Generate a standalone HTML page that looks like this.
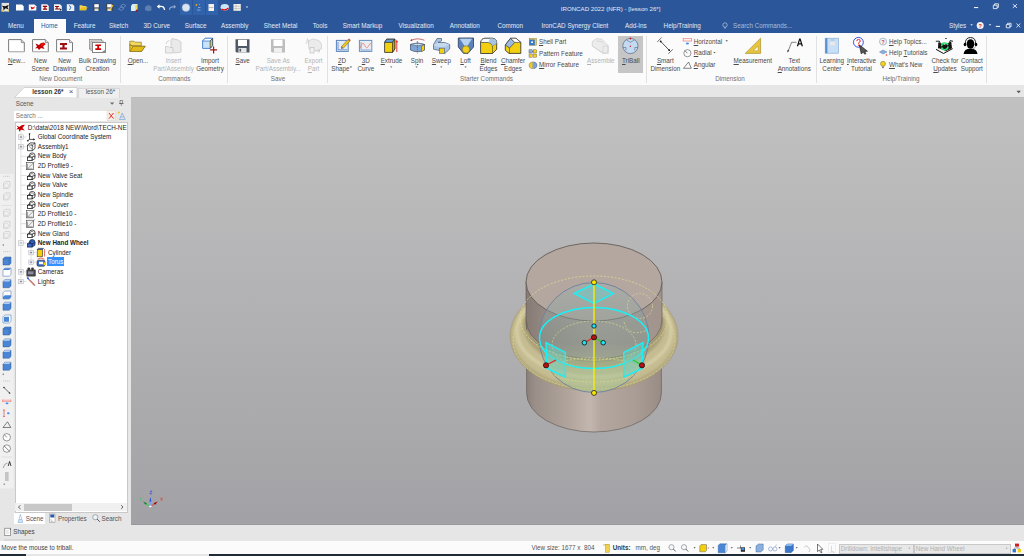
<!DOCTYPE html><html><head><meta charset="utf-8"><style>
html,body{margin:0;padding:0;width:1024px;height:556px;overflow:hidden;background:#E6E6E6}
body>div,body>svg{position:absolute}
.t{white-space:nowrap;font-family:"Liberation Sans",sans-serif}
u{text-underline-offset:0.7px}
</style></head><body>
<div style="left:0px;top:0px;width:1024px;height:33px;background:#2B579A"></div>
<div style="left:0px;top:33px;width:1024px;height:52px;background:#FBFBFB"></div>
<div style="left:0px;top:85px;width:1024px;height:12px;background:#E6E6E6"></div>
<div style="left:0px;top:97px;width:131px;height:428px;background:#E6E6E6"></div>
<div style="left:131px;top:97px;width:893px;height:428px;background:linear-gradient(#C1C1C1,#A2A1A5)"></div>
<div style="left:131px;top:524px;width:893px;height:1px;background:#99989C"></div>
<div style="left:131px;top:97px;width:893px;height:1px;background:#BCBCBC"></div>
<div style="left:0px;top:525px;width:1024px;height:16px;background:#E6E6E6"></div>
<div style="left:0px;top:541px;width:1024px;height:13px;background:#FBFBFB"></div>
<div style="left:0px;top:554px;width:25.5px;height:2px;background:#1E2A35"></div>
<div style="left:25.5px;top:554px;width:183.5px;height:2px;background:#E6E6E6"></div>
<div style="left:209px;top:554px;width:815px;height:2px;background:#1E2A35"></div>
<div style="left:34px;top:19px;width:31.5px;height:14px;background:#FBFBFB"></div>
<div class="t" style="left:8px;top:22.0px;font-size:6.3px;line-height:8px;color:#E4EAF4;">Menu</div>
<div class="t" style="left:73.7px;top:22.0px;font-size:6.3px;line-height:8px;color:#E4EAF4;">Feature</div>
<div class="t" style="left:109px;top:22.0px;font-size:6.3px;line-height:8px;color:#E4EAF4;">Sketch</div>
<div class="t" style="left:143.5px;top:22.0px;font-size:6.3px;line-height:8px;color:#E4EAF4;">3D Curve</div>
<div class="t" style="left:184.8px;top:22.0px;font-size:6.3px;line-height:8px;color:#E4EAF4;">Surface</div>
<div class="t" style="left:221px;top:22.0px;font-size:6.3px;line-height:8px;color:#E4EAF4;">Assembly</div>
<div class="t" style="left:263.7px;top:22.0px;font-size:6.3px;line-height:8px;color:#E4EAF4;">Sheet Metal</div>
<div class="t" style="left:312.7px;top:22.0px;font-size:6.3px;line-height:8px;color:#E4EAF4;">Tools</div>
<div class="t" style="left:342.8px;top:22.0px;font-size:6.3px;line-height:8px;color:#E4EAF4;">Smart Markup</div>
<div class="t" style="left:398.4px;top:22.0px;font-size:6.3px;line-height:8px;color:#E4EAF4;">Visualization</div>
<div class="t" style="left:449.7px;top:22.0px;font-size:6.3px;line-height:8px;color:#E4EAF4;">Annotation</div>
<div class="t" style="left:497.5px;top:22.0px;font-size:6.3px;line-height:8px;color:#E4EAF4;">Common</div>
<div class="t" style="left:541.5px;top:22.0px;font-size:6.3px;line-height:8px;color:#E4EAF4;">IronCAD Synergy Client</div>
<div class="t" style="left:625px;top:22.0px;font-size:6.3px;line-height:8px;color:#E4EAF4;">Add-Ins</div>
<div class="t" style="left:663.6px;top:22.0px;font-size:6.3px;line-height:8px;color:#E4EAF4;">Help/Training</div>
<div class="t" style="left:41px;top:22.0px;font-size:6.3px;line-height:8px;color:#2B579A;">Home</div>
<div class="t" style="left:733px;top:22.0px;font-size:6.3px;line-height:8px;color:#A9BCD9;">Search Commands...</div>
<div class="t" style="left:949px;top:22.0px;font-size:6.3px;line-height:8px;color:#E4EAF4;">Styles</div>
<div class="t" style="left:560.75px;top:5.0px;font-size:6.15px;line-height:8px;color:#E4EAF4;">IRONCAD 2022 (NFR) - [lesson 26*]</div>
<div class="t" style="left:-83.3px;width:200px;text-align:center;top:56.5px;font-size:6.3px;line-height:8px;color:#4A4A4A;"><u>N</u>ew...</div>
<div class="t" style="left:-59.6px;width:200px;text-align:center;top:56.5px;font-size:6.3px;line-height:8px;color:#4A4A4A;">New</div>
<div class="t" style="left:-59.6px;width:200px;text-align:center;top:64.5px;font-size:6.3px;line-height:8px;color:#4A4A4A;">Scene</div>
<div class="t" style="left:-35.5px;width:200px;text-align:center;top:56.5px;font-size:6.3px;line-height:8px;color:#4A4A4A;">New</div>
<div class="t" style="left:-35.5px;width:200px;text-align:center;top:64.5px;font-size:6.3px;line-height:8px;color:#4A4A4A;">Drawing</div>
<div class="t" style="left:-2.5999999999999943px;width:200px;text-align:center;top:56.5px;font-size:6.3px;line-height:8px;color:#4A4A4A;">Bulk Drawing</div>
<div class="t" style="left:-2.5999999999999943px;width:200px;text-align:center;top:64.5px;font-size:6.3px;line-height:8px;color:#4A4A4A;">Creation</div>
<div class="t" style="left:-39.2px;width:200px;text-align:center;top:74.8px;font-size:6.3px;line-height:8px;color:#707070;">New Document</div>
<div class="t" style="left:38px;width:200px;text-align:center;top:56.5px;font-size:6.3px;line-height:8px;color:#4A4A4A;"><u>O</u>pen...</div>
<div class="t" style="left:73.5px;width:200px;text-align:center;top:56.5px;font-size:6.3px;line-height:8px;color:#B4B4B4;">Insert</div>
<div class="t" style="left:73.5px;width:200px;text-align:center;top:64.5px;font-size:6.3px;line-height:8px;color:#B4B4B4;">Part/Assembly</div>
<div class="t" style="left:110px;width:200px;text-align:center;top:56.5px;font-size:6.3px;line-height:8px;color:#4A4A4A;">Import</div>
<div class="t" style="left:110px;width:200px;text-align:center;top:64.5px;font-size:6.3px;line-height:8px;color:#4A4A4A;">Geometry</div>
<div class="t" style="left:74.30000000000001px;width:200px;text-align:center;top:74.8px;font-size:6.3px;line-height:8px;color:#707070;">Commands</div>
<div class="t" style="left:142.7px;width:200px;text-align:center;top:56.5px;font-size:6.3px;line-height:8px;color:#4A4A4A;"><u>S</u>ave</div>
<div class="t" style="left:178.2px;width:200px;text-align:center;top:56.5px;font-size:6.3px;line-height:8px;color:#B4B4B4;">Save As</div>
<div class="t" style="left:178.2px;width:200px;text-align:center;top:64.5px;font-size:6.3px;line-height:8px;color:#B4B4B4;">Part/Assembly...</div>
<div class="t" style="left:213.5px;width:200px;text-align:center;top:56.5px;font-size:6.3px;line-height:8px;color:#B4B4B4;">Export</div>
<div class="t" style="left:213.5px;width:200px;text-align:center;top:64.5px;font-size:6.3px;line-height:8px;color:#B4B4B4;"><u>P</u>art</div>
<div class="t" style="left:178px;width:200px;text-align:center;top:74.8px;font-size:6.3px;line-height:8px;color:#707070;">Save</div>
<div class="t" style="left:242.10000000000002px;width:200px;text-align:center;top:56.5px;font-size:6.3px;line-height:8px;color:#4A4A4A;"><u>2</u>D</div>
<div class="t" style="left:240.3px;width:200px;text-align:center;top:64.5px;font-size:6.3px;line-height:8px;color:#4A4A4A;">Shape</div>
<div class="t" style="left:265.8px;width:200px;text-align:center;top:56.5px;font-size:6.3px;line-height:8px;color:#4A4A4A;"><u>3</u>D</div>
<div class="t" style="left:265.8px;width:200px;text-align:center;top:64.5px;font-size:6.3px;line-height:8px;color:#4A4A4A;">Curve</div>
<div class="t" style="left:291.5px;width:200px;text-align:center;top:56.5px;font-size:6.3px;line-height:8px;color:#4A4A4A;"><u>E</u>xtrude</div>
<div class="t" style="left:317px;width:200px;text-align:center;top:56.5px;font-size:6.3px;line-height:8px;color:#4A4A4A;">S<u>p</u>in</div>
<div class="t" style="left:341.5px;width:200px;text-align:center;top:56.5px;font-size:6.3px;line-height:8px;color:#4A4A4A;"><u>S</u>weep</div>
<div class="t" style="left:365.6px;width:200px;text-align:center;top:56.5px;font-size:6.3px;line-height:8px;color:#4A4A4A;"><u>L</u>oft</div>
<div class="t" style="left:388.5px;width:200px;text-align:center;top:56.5px;font-size:6.3px;line-height:8px;color:#4A4A4A;"><u>B</u>lend</div>
<div class="t" style="left:388.5px;width:200px;text-align:center;top:64.5px;font-size:6.3px;line-height:8px;color:#4A4A4A;">Edges</div>
<div class="t" style="left:413px;width:200px;text-align:center;top:56.5px;font-size:6.3px;line-height:8px;color:#4A4A4A;"><u>C</u>hamfer</div>
<div class="t" style="left:413px;width:200px;text-align:center;top:64.5px;font-size:6.3px;line-height:8px;color:#4A4A4A;">Edges</div>
<div class="t" style="left:386.4px;width:200px;text-align:center;top:74.8px;font-size:6.3px;line-height:8px;color:#707070;">Starter Commands</div>
<div class="t" style="left:539px;top:37.5px;font-size:6.3px;line-height:8px;color:#4A4A4A;"><u>S</u>hell Part</div>
<div class="t" style="left:539px;top:49.6px;font-size:6.3px;line-height:8px;color:#4A4A4A;">Pattern Feature</div>
<div class="t" style="left:539px;top:61.0px;font-size:6.3px;line-height:8px;color:#4A4A4A;"><u>M</u>irror Feature</div>
<div style="left:618.3px;top:36px;width:24.4px;height:36.7px;background:#C6C6C6"></div>
<div class="t" style="left:500.79999999999995px;width:200px;text-align:center;top:56.5px;font-size:6.3px;line-height:8px;color:#B4B4B4;"><u>A</u>ssemble</div>
<div class="t" style="left:530.8px;width:200px;text-align:center;top:56.5px;font-size:6.3px;line-height:8px;color:#4A4A4A;"><u>T</u>riBall</div>
<div class="t" style="left:565.3px;width:200px;text-align:center;top:56.5px;font-size:6.3px;line-height:8px;color:#4A4A4A;"><u>S</u>mart</div>
<div class="t" style="left:565.3px;width:200px;text-align:center;top:64.5px;font-size:6.3px;line-height:8px;color:#4A4A4A;">Dimension</div>
<div class="t" style="left:693.7px;top:37.5px;font-size:6.3px;line-height:8px;color:#4A4A4A;"><u>H</u>orizontal</div>
<div class="t" style="left:693.7px;top:49.1px;font-size:6.3px;line-height:8px;color:#4A4A4A;"><u>R</u>adial</div>
<div class="t" style="left:693.7px;top:61.0px;font-size:6.3px;line-height:8px;color:#4A4A4A;"><u>A</u>ngular</div>
<div class="t" style="left:630px;width:200px;text-align:center;top:74.8px;font-size:6.3px;line-height:8px;color:#707070;">Dimension</div>
<div class="t" style="left:652.8px;width:200px;text-align:center;top:56.5px;font-size:6.3px;line-height:8px;color:#4A4A4A;"><u>M</u>easurement</div>
<div class="t" style="left:694.3px;width:200px;text-align:center;top:56.5px;font-size:6.3px;line-height:8px;color:#4A4A4A;">Text</div>
<div class="t" style="left:694.3px;width:200px;text-align:center;top:64.5px;font-size:6.3px;line-height:8px;color:#4A4A4A;"><u>A</u>nnotations</div>
<div class="t" style="left:731.8px;width:200px;text-align:center;top:56.5px;font-size:6.3px;line-height:8px;color:#4A4A4A;">Learning</div>
<div class="t" style="left:731.8px;width:200px;text-align:center;top:64.5px;font-size:6.3px;line-height:8px;color:#4A4A4A;">Center</div>
<div class="t" style="left:761.5px;width:200px;text-align:center;top:56.5px;font-size:6.3px;line-height:8px;color:#4A4A4A;"><u>I</u>nteractive</div>
<div class="t" style="left:761.5px;width:200px;text-align:center;top:64.5px;font-size:6.3px;line-height:8px;color:#4A4A4A;">Tutorial</div>
<div class="t" style="left:889px;top:37.5px;font-size:6.3px;line-height:8px;color:#4A4A4A;"><u>H</u>elp Topics...</div>
<div class="t" style="left:889px;top:49.1px;font-size:6.3px;line-height:8px;color:#4A4A4A;">Help <u>T</u>utorials</div>
<div class="t" style="left:889px;top:61.0px;font-size:6.3px;line-height:8px;color:#4A4A4A;"><u>W</u>hat's New</div>
<div class="t" style="left:801px;width:200px;text-align:center;top:74.8px;font-size:6.3px;line-height:8px;color:#707070;">Help/Training</div>
<div class="t" style="left:845px;width:200px;text-align:center;top:56.5px;font-size:6.3px;line-height:8px;color:#4A4A4A;">Check for</div>
<div class="t" style="left:845px;width:200px;text-align:center;top:64.5px;font-size:6.3px;line-height:8px;color:#4A4A4A;"><u>U</u>pdates</div>
<div class="t" style="left:871.8px;width:200px;text-align:center;top:56.5px;font-size:6.3px;line-height:8px;color:#4A4A4A;">Contact</div>
<div class="t" style="left:871.8px;width:200px;text-align:center;top:64.5px;font-size:6.3px;line-height:8px;color:#4A4A4A;">Support</div>
<div style="left:120.3px;top:36px;width:1px;height:47px;background:#E1E1E1"></div>
<div style="left:227.4px;top:36px;width:1px;height:47px;background:#E1E1E1"></div>
<div style="left:327.3px;top:36px;width:1px;height:47px;background:#E1E1E1"></div>
<div style="left:645.5px;top:36px;width:1px;height:47px;background:#E1E1E1"></div>
<div style="left:815.5px;top:36px;width:1px;height:47px;background:#E1E1E1"></div>
<div style="left:986.3px;top:36px;width:1px;height:47px;background:#E1E1E1"></div>
<svg style="position:absolute;left:14px;top:87px;" width="64" height="11" viewBox="0 0 64 11"><path d="M0.5 10.6 L10 0.5 L63 0.5 L63 11 Z" fill="#FFFFFF" stroke="#BDBDBD" stroke-width="0.6"/></svg>
<div style="left:78px;top:87.5px;width:42px;height:10px;background:#EFEFEF;border:1px solid #D8D8D8;border-bottom:none;box-sizing:border-box"></div>
<div class="t" style="left:32.3px;top:88.3px;font-size:6.3px;line-height:8px;color:#333;font-weight:bold">lesson 26*</div>
<div class="t" style="left:-28.799999999999997px;width:200px;text-align:center;top:88.3px;font-size:8px;line-height:8px;color:#555;">×</div>
<div class="t" style="left:85.7px;top:88.3px;font-size:6.3px;line-height:8px;color:#555;">lesson 26*</div>
<div class="t" style="left:15.7px;top:99.8px;font-size:6.3px;line-height:8px;color:#555;">Scene</div>
<div style="left:14px;top:110.7px;width:93px;height:10px;background:#fff"></div>
<div class="t" style="left:15.7px;top:111.5px;font-size:6.3px;line-height:8px;color:#777;">Search ...</div>
<div style="left:14.5px;top:121.5px;width:113px;height:391px;background:#fff;border:1px solid #C9C9C9;box-sizing:border-box"></div>
<div class="t" style="left:27.7px;top:123.6px;font-size:6.3px;line-height:8px;color:#222;">D:\data\2018 NEW\Word\TECH-NE</div>
<div class="t" style="left:37.8px;top:133.23px;font-size:6.3px;line-height:8px;color:#222;">Global Coordinate System</div>
<div class="t" style="left:37.8px;top:142.85999999999999px;font-size:6.3px;line-height:8px;color:#222;">Assembly1</div>
<div class="t" style="left:37.8px;top:152.49px;font-size:6.3px;line-height:8px;color:#222;">New Body</div>
<div class="t" style="left:37.8px;top:162.12px;font-size:6.3px;line-height:8px;color:#222;">2D Profile9 -</div>
<div class="t" style="left:37.8px;top:171.75px;font-size:6.3px;line-height:8px;color:#222;">New Valve Seat</div>
<div class="t" style="left:37.8px;top:181.38px;font-size:6.3px;line-height:8px;color:#222;">New Valve</div>
<div class="t" style="left:37.8px;top:191.01px;font-size:6.3px;line-height:8px;color:#222;">New Spindle</div>
<div class="t" style="left:37.8px;top:200.64px;font-size:6.3px;line-height:8px;color:#222;">New Cover</div>
<div class="t" style="left:37.8px;top:210.26999999999998px;font-size:6.3px;line-height:8px;color:#222;">2D Profile10 -</div>
<div class="t" style="left:37.8px;top:219.9px;font-size:6.3px;line-height:8px;color:#222;">2D Profile10 -</div>
<div class="t" style="left:37.8px;top:229.53px;font-size:6.3px;line-height:8px;color:#222;">New Gland</div>
<div class="t" style="left:37.8px;top:239.16px;font-size:6.3px;line-height:8px;color:#222;font-weight:bold">New Hand Wheel</div>
<div class="t" style="left:48px;top:248.79000000000002px;font-size:6.3px;line-height:8px;color:#222;">Cylinder</div>
<div style="left:47.1px;top:257px;width:17.4px;height:9.3px;background:#3390FF"></div>
<div class="t" style="left:48px;top:258.42px;font-size:6.3px;line-height:8px;color:#fff;">Torus</div>
<div class="t" style="left:37.8px;top:268.05px;font-size:6.3px;line-height:8px;color:#222;">Cameras</div>
<div class="t" style="left:37.8px;top:277.68px;font-size:6.3px;line-height:8px;color:#222;">Lights</div>
<div style="left:15px;top:503.2px;width:112px;height:8px;background:#F0F0F0"></div>
<div style="left:24px;top:503.6px;width:48px;height:7.4px;background:#C8C8C8"></div>
<div style="left:14.2px;top:512.8px;width:30.6px;height:11.2px;background:#fff"></div>
<div class="t" style="left:25.7px;top:514.7px;font-size:6.3px;line-height:8px;color:#555;">Scene</div>
<div class="t" style="left:58px;top:514.7px;font-size:6.3px;line-height:8px;color:#555;">Properties</div>
<div class="t" style="left:101.5px;top:514.7px;font-size:6.3px;line-height:8px;color:#555;">Search</div>
<div class="t" style="left:13.2px;top:528.3px;font-size:6.3px;line-height:8px;color:#444;">Shapes</div>
<div class="t" style="left:1.3px;top:544.0px;font-size:6.3px;line-height:8px;color:#444;">Move the mouse to triball.</div>
<div class="t" style="left:531.6px;top:544.0px;font-size:6.3px;line-height:8px;color:#555;">View size: 1677 x &nbsp;804</div>
<div class="t" style="left:612.7px;top:544.0px;font-size:6.3px;line-height:8px;color:#333;font-weight:bold">Units:</div>
<div class="t" style="left:635.5px;top:544.0px;font-size:6.3px;line-height:8px;color:#555;">mm, deg</div>
<div style="left:839px;top:543.5px;width:74.5px;height:10.3px;background:#E8E8E8;border:1px solid #C8C8C8;box-sizing:border-box"></div>
<div class="t" style="left:840.8px;top:544.5px;font-size:6.3px;line-height:8px;color:#B0B0B0;">Drilldown: Intellishape</div>
<div style="left:914px;top:543.5px;width:97px;height:10.3px;background:#E8E8E8;border:1px solid #C8C8C8;box-sizing:border-box"></div>
<div class="t" style="left:915.7px;top:544.5px;font-size:6.3px;line-height:8px;color:#B0B0B0;">New Hand Wheel</div>
<svg style="position:absolute;left:0;top:0" width="1024" height="100"><path d="M349.7 66.6 h2.4 l-1.2 1.4 Z" fill="#555"/><path d="M390.0 66.39999999999999 h2.4 l-1.2 1.4 Z" fill="#555"/><path d="M415.40000000000003 66.39999999999999 h2.4 l-1.2 1.4 Z" fill="#555"/><path d="M440.1 66.39999999999999 h2.4 l-1.2 1.4 Z" fill="#555"/><path d="M464.40000000000003 66.39999999999999 h2.4 l-1.2 1.4 Z" fill="#555"/><path d="M725.5 40.3 h2.4 l-1.2 1.4 Z" fill="#555"/><path d="M713.3 51.9 h2.4 l-1.2 1.4 Z" fill="#555"/></svg>
<svg style="position:absolute;left:6px;top:37px;overflow:visible" width="22" height="18" viewBox="6 37 22 18"><path d="M8.6 39.6 H21.3 L24.3 42.6 V51.6 H8.6 Z" fill="#fff" stroke="#7A7A7A" stroke-width="1"/><path d="M21.3 39.6 V42.6 H24.3" fill="#E0E0E0" stroke="#7A7A7A" stroke-width="0.8"/><rect x="8.6" y="51.0" width="15.700000000000003" height="1.2" fill="#B9B9B9"/></svg>
<svg style="position:absolute;left:30px;top:37px;overflow:visible" width="22" height="18" viewBox="30 37 22 18"><path d="M32.6 39.6 H45.3 L48.3 42.6 V51.6 H32.6 Z" fill="#fff" stroke="#7A7A7A" stroke-width="1"/><path d="M45.3 39.6 V42.6 H48.3" fill="#E0E0E0" stroke="#7A7A7A" stroke-width="0.8"/><rect x="32.6" y="51.0" width="15.699999999999996" height="1.2" fill="#B9B9B9"/><path d="M35.5 43.5 L39 45 L41 43 L44 42.5 L45.5 44 L43 46.5 L44.5 49 L41 48 L39 50 L37.5 48 L35 48.5 L37 46.5 Z" fill="#C00000"/><path d="M41 43 L45.5 44 L43 46.5 L41 46 Z" fill="#F01010"/></svg>
<svg style="position:absolute;left:54px;top:37px;overflow:visible" width="22" height="18" viewBox="54 37 22 18"><path d="M56.6 39.6 H69.5 L72.5 42.6 V51.6 H56.6 Z" fill="#fff" stroke="#7A7A7A" stroke-width="1"/><path d="M69.5 39.6 V42.6 H72.5" fill="#E0E0E0" stroke="#7A7A7A" stroke-width="0.8"/><rect x="56.6" y="51.0" width="15.899999999999999" height="1.2" fill="#B9B9B9"/><path d="M59.98 42.900000000000006 h7.040000000000001 v1.9800000000000002 h-2.4200000000000004 v2.64 h2.4200000000000004 v1.9800000000000002 h-7.040000000000001 v-1.9800000000000002 h2.4200000000000004 v-2.64 h-2.4200000000000004 Z" fill="#9E0F0F"/></svg>
<svg style="position:absolute;left:87px;top:37px;overflow:visible" width="22" height="18" viewBox="87 37 22 18"><rect x="89.5" y="39.5" width="12" height="9.5" fill="#F4F4F4" stroke="#8A8A8A" stroke-width="0.8"/><rect x="91" y="41" width="12" height="9.5" fill="#F8F8F8" stroke="#8A8A8A" stroke-width="0.8"/><rect x="92.5" y="42.5" width="13" height="10" fill="#fff" stroke="#7A7A7A" stroke-width="0.9"/><path d="M95.32000000000001 44.5 h5.760000000000001 v1.62 h-1.9800000000000002 v2.16 h1.9800000000000002 v1.62 h-5.760000000000001 v-1.62 h1.9800000000000002 v-2.16 h-1.9800000000000002 Z" fill="#D00000"/><path d="M102 52 L105.5 49.5 V52.5 Z" fill="#8A8A8A"/></svg>
<svg style="position:absolute;left:127px;top:38px;overflow:visible" width="22" height="16" viewBox="127 38 22 16"><path d="M129.8 41.2 h4.2 l1 1 h6.3 v3.5 h-11.5 Z" fill="#F5D85A" stroke="#8A7A30" stroke-width="0.7"/><path d="M129.8 44.5 V51.4 H141.5 L145.2 46.3 H133.3 Z" fill="#E8C020" stroke="#7E6A20" stroke-width="0.7"/><path d="M129.8 51.4 L133.3 46.3 H145.2 L141.5 51.4 Z" fill="#E3BC1A" stroke="#7E6A20" stroke-width="0.6"/></svg>
<svg style="position:absolute;left:163px;top:36px;overflow:visible" width="22" height="20" viewBox="163 36 22 20"><path d="M172 38.5 L178 40 L181 42 V52 L175 53 L171 51 V41 Z" fill="#EAEAEA" stroke="#C8C8C8" stroke-width="0.8"/><path d="M165.5 46.5 h3 l1 1 h3.5 v5.5 h-7.5 Z" fill="#EDEDED" stroke="#C8C8C8" stroke-width="0.8"/><path d="M166 44 Q166.5 41 169.5 40.5" fill="none" stroke="#C8C8C8" stroke-width="0.8"/></svg>
<svg style="position:absolute;left:200px;top:36px;overflow:visible" width="20" height="20" viewBox="200 36 20 20"><path d="M202.6 41 L205 38.3 H212.6 V45.6 L210.2 48.4 H202.6 Z" fill="#C9E2F8" stroke="#3A7FD0" stroke-width="0.9"/><path d="M202.6 41 L205 38.3 H212.6 L210.2 41 Z" fill="#fff" stroke="#3A7FD0" stroke-width="0.8"/><path d="M210.2 41 L212.6 38.3 V45.6 L210.2 48.4 Z" fill="#F2D000" stroke="#1E3E80" stroke-width="0.7"/><path d="M213.6 46.4 V53.4 M210.1 49.9 H217.1" stroke="#A01818" stroke-width="1.2"/></svg>
<svg style="position:absolute;left:233px;top:37px;overflow:visible" width="20" height="18" viewBox="233 37 20 18"><path d="M235.5 39.2 H249.5 V52.5 H236.5 L235.5 51.5 Z" fill="#4F5866"/><rect x="238" y="39.8" width="9" height="6.2" fill="#fff"/><rect x="238.5" y="48" width="8" height="4.5" fill="#E6E6E6"/><rect x="239.5" y="48.8" width="1.6" height="2.8" fill="#4F5866"/></svg>
<svg style="position:absolute;left:269px;top:37px;overflow:visible" width="20" height="18" viewBox="269 37 20 18"><path d="M271 39.2 H285 V52.5 H272 L271 51.5 Z" fill="#BDBDBD"/><rect x="273.5" y="39.8" width="9" height="6.2" fill="#fff"/><rect x="274" y="48" width="8" height="4.5" fill="#F0F0F0"/></svg>
<svg style="position:absolute;left:303px;top:36px;overflow:visible" width="22" height="20" viewBox="303 36 22 20"><path d="M308 41 L313 39 L319 40.5 L321.5 44 V49 L315 51 L309 49 Z" fill="#EBEBEB" stroke="#CDCDCD" stroke-width="0.7"/><rect x="310" y="47.5" width="4" height="5.5" fill="#F2F2F2" stroke="#C0C0C0" stroke-width="0.7"/><path d="M316 51 h4 M318.5 49.5 l1.5 1.5 l-1.5 1.5" stroke="#C0C0C0" stroke-width="0.7" fill="none"/><path d="M306 44 L307.5 38.5 L309 44" stroke="#C8C8C8" stroke-width="0.6" fill="none"/></svg>
<svg style="position:absolute;left:334px;top:36px;overflow:visible" width="20" height="18" viewBox="334 36 20 18"><rect x="336.4" y="40.4" width="11.8" height="11" fill="#E4EBF3" stroke="#5B83BD" stroke-width="1"/><path d="M338 49.8 H347 M338 42 V50" stroke="#4A78C0" stroke-width="0.7"/><path d="M341.5 46.5 L348 39.5 L349.8 41.2 L343.3 48.2 Z" fill="#F0C820" stroke="#6E5A10" stroke-width="0.5"/><path d="M348 39.5 L349 38.5 L350.8 40.2 L349.8 41.2 Z" fill="#C05050"/><path d="M341.5 46.5 L341 48.8 L343.3 48.2 Z" fill="#555"/></svg>
<svg style="position:absolute;left:357px;top:37px;overflow:visible" width="18" height="17" viewBox="357 37 18 17"><rect x="359.4" y="40.4" width="12.4" height="11" fill="#E8EEF5" stroke="#6A90C0" stroke-width="1"/><path d="M361 42 V50 H370.5" stroke="#4A78C0" stroke-width="0.6" fill="none"/><path d="M360.5 48 Q362.5 40 364.5 45 T368.5 46 T371 44" stroke="#F07050" stroke-width="0.7" fill="none"/></svg>
<svg style="position:absolute;left:382px;top:37px;overflow:visible" width="18" height="18" viewBox="382 37 18 18"><path d="M384.6 42.4 L386.7 39.2 H394.8 V49 L392.5 52.4 H384.6 Z" fill="#F2D010" stroke="#2A2A2A" stroke-width="0.8"/><path d="M384.6 42.4 L386.7 39.2 H394.8 L392.5 42.4 Z" fill="#6AA0D8" stroke="#2A2A2A" stroke-width="0.7"/><path d="M392.5 42.4 L394.8 39.2 V49 L392.5 52.4 Z" fill="#C8A800" stroke="#2A2A2A" stroke-width="0.7"/><path d="M396.8 52 V41.5" stroke="#E02020" stroke-width="0.9"/><path d="M395.6 42.3 L396.8 39.8 L398 42.3 Z" fill="#E02020"/></svg>
<svg style="position:absolute;left:407px;top:36px;overflow:visible" width="21" height="19" viewBox="407 36 21 19"><path d="M410.5 44.5 Q417.5 41.5 424.5 44.5 V50 Q417.5 53.5 410.5 50 Z" fill="#7EA6D6" stroke="#3C4C66" stroke-width="0.7"/><path d="M410.5 44.5 Q417.5 41.5 424.5 44.5 Q417.5 47.5 410.5 44.5 Z" fill="#CFE2F5" stroke="#3C4C66" stroke-width="0.6"/><path d="M421.5 46.2 L424.5 44.5 V50 L421.5 51.8 Z" fill="#F2D010" stroke="#3C4C66" stroke-width="0.5"/><path d="M417.4 41 V53.5" stroke="#B03030" stroke-width="0.7" stroke-dasharray="1.2 0.8"/><path d="M411 40.5 Q417.5 37.3 424.5 40.3" stroke="#B03030" stroke-width="0.7" fill="none"/><path d="M410 40.2 l2.2 -1.2 l-0.2 2.2 Z" fill="#B03030"/></svg>
<svg style="position:absolute;left:431px;top:36px;overflow:visible" width="21" height="19" viewBox="431 36 21 19"><path d="M437 38.5 H441.5 V40.8 L438 42.5 L444.8 42.5 L449.7 44.5 V49 L444.8 53.6 L439.5 50.5 L433.5 49.2 V44.5 Z" fill="#A8C4E4" stroke="#4A5A70" stroke-width="0.7"/><path d="M434 44.7 L437.5 43 H444.5 L449.5 44.5 L444.5 47 H438 L434 45.5 Z" fill="#C4D8EE"/><rect x="439.5" y="48.2" width="4.8" height="5.3" fill="#F2D010" stroke="#4A5A70" stroke-width="0.6"/></svg>
<svg style="position:absolute;left:456px;top:36px;overflow:visible" width="20" height="19" viewBox="456 36 20 19"><path d="M458.3 38 H473.5 V47 L468 53.4 H463.5 L458.3 47 Z" fill="#5C82BC" stroke="#2C3C58" stroke-width="0.8"/><path d="M459.8 38.7 H472 L466 48 Z" fill="#B6D4F0"/><circle cx="466" cy="49.5" r="3.7" fill="#F2D020" stroke="#6A5A10" stroke-width="0.5"/></svg>
<svg style="position:absolute;left:478px;top:36px;overflow:visible" width="21" height="19" viewBox="478 36 21 19"><path d="M480.6 42.5 Q481.5 38.3 485 38.3 H492.5 Q496.7 38.8 496.7 43 V49.3 L492.5 53.5 H480.6 Z" fill="#F2D010" stroke="#2A2A2A" stroke-width="0.8"/><path d="M480.6 42.5 Q481.5 38.3 485 38.3 H492.5 Q496.7 38.8 496.7 43 L492.5 46 Q492 42.5 488 42.5 Z" fill="#F4F8FC" stroke="#2A2A2A" stroke-width="0.6"/><path d="M490 38.4 H492.5 Q496.7 38.8 496.7 43 L492.5 46 Q492 42.8 488.5 42.5 Z" fill="#A6C4E6"/><path d="M492.5 46 V53.5" stroke="#2A2A2A" stroke-width="0.5"/></svg>
<svg style="position:absolute;left:503px;top:36px;overflow:visible" width="20" height="19" viewBox="503 36 20 19"><path d="M505.3 45 L510.5 38.3 H516 L520.8 42.4 V53.4 H509 L505.3 50.3 Z" fill="#F2D010" stroke="#2A2A2A" stroke-width="0.8"/><path d="M505.3 45 L510.5 38.3 L514.8 42.4 L509.5 48 Z" fill="#9CBAE0" stroke="#2A2A2A" stroke-width="0.6"/><path d="M510.5 38.3 H516 L520.8 42.4 H514.8 Z" fill="#fff" stroke="#2A2A2A" stroke-width="0.6"/><path d="M509.5 48 V53.4" stroke="#2A2A2A" stroke-width="0.5"/></svg>
<svg style="position:absolute;left:527px;top:37px;overflow:visible" width="12" height="34" viewBox="527 37 12 34"><rect x="529.3" y="38.6" width="7" height="6.6" fill="#F0D040" stroke="#8A7A30" stroke-width="0.5"/><rect x="529.3" y="39.5" width="5.5" height="5.7" fill="#3A78C8"/><rect x="531.2" y="41.4" width="1.8" height="1.6" fill="#fff"/><rect x="529" y="49.8" width="3.2" height="3.2" fill="#8AB0E0" stroke="#345" stroke-width="0.4"/><rect x="533.5" y="49.8" width="3.2" height="3.2" fill="#F2D020" stroke="#654" stroke-width="0.4"/><rect x="529" y="54" width="3.2" height="3.2" fill="#F2D020" stroke="#654" stroke-width="0.4"/><rect x="533.5" y="54" width="3.2" height="3.2" fill="#F2D020" stroke="#654" stroke-width="0.4"/><path d="M532.2 51.4 H533.5" stroke="#333" stroke-width="0.5"/><path d="M532.5 61.8 Q529 62.5 529 65.3 Q529 68.2 532.5 68.8 Z" fill="#F2D020" stroke="#654" stroke-width="0.4"/><path d="M533.6 61.8 Q537 62.5 537 65.3 Q537 68.2 533.6 68.8 Z" fill="#7AA6DE" stroke="#345" stroke-width="0.4"/></svg>
<svg style="position:absolute;left:590px;top:36px;overflow:visible" width="21" height="19" viewBox="590 36 21 19"><path d="M592.3 41.5 L596.5 38.6 L602 39.2 L604.5 42 L608 45.3 V52.6 L603.5 53.5 L592.3 46 Z" fill="#ECECEC" stroke="#CDCDCD" stroke-width="0.7"/><path d="M603 46 H608.3 V53.3 H603 Z M592.3 46 L603 53.3" fill="none" stroke="#CDCDCD" stroke-width="0.6"/><path d="M596.5 41 L601.5 41.5 L603.5 44" fill="none" stroke="#D0D0D0" stroke-width="0.7"/></svg>
<svg style="position:absolute;left:620px;top:36px;overflow:visible" width="21" height="19" viewBox="620 36 21 19"><circle cx="630.4" cy="46" r="7.6" fill="#C3DAF0" stroke="#56698A" stroke-width="0.7"/><path d="M626.5 40 L630.4 42.3 L634.3 40 M622.9 47.5 H626 V50.5 M637.9 47.5 H634.8 V50.5" fill="none" stroke="#56698A" stroke-width="0.6"/><circle cx="630.4" cy="38.5" r="0.9" fill="#D02020"/><circle cx="630.4" cy="46.3" r="0.7" fill="#D02020"/></svg>
<svg style="position:absolute;left:655px;top:36px;overflow:visible" width="20" height="19" viewBox="655 36 20 19"><path d="M660.7 41.4 L669.2 50.2" stroke="#222" stroke-width="0.8"/><circle cx="660.7" cy="41.4" r="0.9" fill="#111"/><circle cx="669.2" cy="50.2" r="0.9" fill="#111"/><path d="M657.2 41.9 L661.6 37.6 M668.3 53.7 L672.8 49.4" stroke="#333" stroke-width="0.7"/></svg>
<svg style="position:absolute;left:681px;top:36px;overflow:visible" width="13" height="35" viewBox="681 36 13 35"><path d="M683.2 38.2 V41.5 M691.5 38.2 V41.5 M683.2 38.6 H691.5 M683.2 41 H691.5" stroke="#F06060" stroke-width="0.6"/><ellipse cx="687.4" cy="43.4" rx="1.6" ry="1" fill="#3A90F0"/><circle cx="687.4" cy="53.2" r="3.6" fill="none" stroke="#555" stroke-width="0.6"/><path d="M685 50.8 L687.4 53.2" stroke="#333" stroke-width="0.6"/><path d="M683.5 68.3 H691.3 L688.6 62 Z" fill="none" stroke="#333" stroke-width="0.6"/></svg>
<svg style="position:absolute;left:743px;top:36px;overflow:visible" width="20" height="19" viewBox="743 36 20 19"><path d="M745.2 53.4 L760.6 38.2 V53.4 Z" fill="#E6C43E" stroke="#A08420" stroke-width="0.6"/><path d="M753.5 50.7 L758 46.2 V50.7 Z" fill="#fff" stroke="#A08420" stroke-width="0.4"/></svg>
<svg style="position:absolute;left:785px;top:36px;overflow:visible" width="20" height="19" viewBox="785 36 20 19"><path d="M787.8 52 L791.6 42.3 H796.5" fill="none" stroke="#333" stroke-width="0.6"/><path d="M787.2 52.5 L787.7 49.8 L789.3 50.6 Z" fill="#333"/><path d="M796.8 46.3 L799.2 38.4 H800.6 L803 46.3 H801.6 L801.1 44.5 H798.7 L798.2 46.3 Z M799 43.3 H800.8 L799.9 40.2 Z" fill="#111"/></svg>
<svg style="position:absolute;left:823px;top:36px;overflow:visible" width="18" height="19" viewBox="823 36 18 19"><rect x="825.2" y="38.2" width="13.3" height="15" fill="#C8DFF6" stroke="#7AA3D6" stroke-width="0.6"/><rect x="825.2" y="38.2" width="2.2" height="15" fill="#5C8ED0"/><rect x="830" y="41.8" width="5" height="3.4" fill="#E9E9E9"/><path d="M830.5 40 h4" stroke="#7A9AC0" stroke-width="0.5"/></svg>
<svg style="position:absolute;left:851px;top:36px;overflow:visible" width="20" height="19" viewBox="851 36 20 19"><circle cx="858.4" cy="42.3" r="4.9" fill="#fff" stroke="#1A3CF0" stroke-width="0.9"/><path d="M856.8 41.2 Q856.8 39.4 858.5 39.4 Q860.2 39.4 860.2 41 Q860.2 42.2 858.6 42.8 V43.8" fill="none" stroke="#F02020" stroke-width="1"/><circle cx="858.6" cy="45.2" r="0.6" fill="#F02020"/><path d="M859.3 44.8 L867.5 51.2 L864.6 51.6 L866 53.6 L864.8 54.2 L863.2 52.3 L861.2 53.8 Z" fill="#555" stroke="#111" stroke-width="0.6"/></svg>
<svg style="position:absolute;left:877px;top:37px;overflow:visible" width="12" height="33" viewBox="877 37 12 33"><circle cx="883" cy="41.6" r="3.5" fill="#F4F4F4" stroke="#7A96B8" stroke-width="0.6"/><text x="881.4" y="43.8" font-size="5" font-family="Liberation Sans" font-weight="bold" fill="#D03030">?</text><path d="M879.5 52 L883 50 L887 52 L883 54 Z" fill="#8CB0E0" stroke="#4A6A9A" stroke-width="0.4"/><circle cx="886.5" cy="55" r="0.8" fill="#E04020"/><circle cx="883" cy="63.8" r="2.5" fill="#F2D020" stroke="#7A6A10" stroke-width="0.5"/><rect x="882" y="66.3" width="2" height="1.8" fill="#888"/></svg>
<svg style="position:absolute;left:934px;top:36px;overflow:visible" width="22" height="20" viewBox="934 36 22 20"><path d="M945 38.5 h2" stroke="#222" stroke-width="0.7"/><path d="M938.3 42.3 L944.5 44.8 L951.2 41.6 L952 48.3 L944.5 51.8 L938 48.5 Z" fill="#111"/><path d="M935.8 41.3 L939.3 41.1 L940.2 43.2 M953 41.3 L950.2 40.6 L949.4 42.6" fill="none" stroke="#111" stroke-width="0.9"/><path d="M936.8 49.6 L943.6 53.2 L946 51 L939 48.3 Z" fill="#F6F6F6"/><path d="M936 49.3 L943.5 53.5 L952.7 48.6" fill="none" stroke="#111" stroke-width="1"/><path d="M941.6 46.2 A3.2 3.2 0 0 1 947.6 44.6" fill="none" stroke="#30E070" stroke-width="1.5"/><path d="M948 46.4 A3.2 3.2 0 0 1 942 48" fill="none" stroke="#30E070" stroke-width="1.5"/><path d="M946.3 43.2 L948.8 43.8 L947.6 45.8 Z M943.3 49.4 L940.8 48.8 L942 46.8 Z" fill="#30E070"/></svg>
<svg style="position:absolute;left:961px;top:35px;overflow:visible" width="19" height="20" viewBox="961 35 19 20"><ellipse cx="970.5" cy="44" rx="3.8" ry="4.8" fill="#000"/><path d="M963.6 54 Q964 48.8 970.5 48.8 Q977 48.8 977.5 54 Z" fill="#000"/><path d="M965.3 44.5 Q965 37.5 970.5 37.5 Q976 37.5 975.7 44.5" fill="none" stroke="#111" stroke-width="0.9"/><ellipse cx="965" cy="44.5" rx="1.3" ry="1.8" fill="#000"/><ellipse cx="976" cy="44.5" rx="1.3" ry="1.8" fill="#000"/><path d="M975.8 46 Q975 49 972 49" fill="none" stroke="#666" stroke-width="0.5"/></svg>
<div style="position:absolute;left:179.8px;top:0;width:12.399999999999977px;height:14.5px;background:#3063AC"></div>
<div style="position:absolute;left:192.6px;top:0;width:12.700000000000017px;height:14.5px;background:#3063AC"></div>
<div style="position:absolute;left:205.8px;top:0;width:11.899999999999977px;height:14.5px;background:#3063AC"></div>
<svg style="position:absolute;left:0px;top:0px;overflow:visible" width="256" height="16" viewBox="0 0 256 16"><rect x="1.6" y="2.9" width="7.4" height="8.6" fill="#E4E2DA"/><path d="M1.6 9 V11.5 H4.5 Z M9 9.5 V11.5 H7 Z" fill="#E6C850"/><path d="M1.8 5.8 L5 6.2 L8.8 5 L7.5 7.5 L8.8 9.5 L5.5 8.3 L3.5 10.5 L3.3 7.5 Z" fill="#111"/><path d="M16 4.5 H22 L23.7 6.2 V10.6 H16 Z" fill="#fff"/><path d="M28.8 4.5 H34.6 L36.3 6.2 V10.6 H28.8 Z" fill="#fff"/><path d="M30.5 6.5 L33 7.5 L35 6.3 L34 8.5 L31.5 9.5 Z" fill="#E00000"/><path d="M41.3 4.3 H47.1 L48.8 6 V11 H41.3 Z" fill="#F4F4F4"/><path d="M42.92 5.75 h4.16 v1.1700000000000002 h-1.4300000000000002 v1.56 h1.4300000000000002 v1.1700000000000002 h-4.16 v-1.1700000000000002 h1.4300000000000002 v-1.56 h-1.4300000000000002 Z" fill="#A00000"/><path d="M54 4.3 H60 L61.8 6 V11 H54 Z" fill="#F4F4F4"/><path d="M55.08 5.9 h3.84 v1.08 h-1.32 v1.44 h1.32 v1.08 h-3.84 v-1.08 h1.32 v-1.44 h-1.32 Z" fill="#900000"/><path d="M59 8 L61.8 9.5 L60 11" fill="#333"/><path d="M66.8 4.3 H72.6 L74.3 6 V11 H66.8 Z" fill="#F0F0F0"/><path d="M69 5.5 L71 7 L69.5 10" stroke="#2A7AD8" stroke-width="1" fill="none"/><path d="M79.6 5.3 h2.5 l0.7 0.7 h3.5 v4.3 h-6.7 Z" fill="#F4D45A"/><path d="M79.6 10.3 L81.5 7.3 H87.7 L85.6 10.3 Z" fill="#E8C020"/><rect x="93" y="3.5" width="7" height="7.5" fill="#404650"/><rect x="94.3" y="4.2" width="4.5" height="3.2" fill="#fff"/><rect x="94.5" y="8.5" width="4" height="2.5" fill="#ddd"/><rect x="105.9" y="3.5" width="7" height="7.5" fill="#404650"/><rect x="107.2" y="4.2" width="4.5" height="3.2" fill="#fff"/><rect x="107.4" y="8.5" width="4" height="2.5" fill="#ddd"/><path d="M110 10 L113 5" stroke="#F0C820" stroke-width="1.2"/><path d="M118.5 9 L121 7 L124 8.5 L121.5 10.5 Z M120.5 6 L123 4 L125.9 5.5 L123.5 7.5 Z" fill="none" stroke="#7A96C4" stroke-width="0.7"/><path d="M131 6 L132.5 4 H137.5 V9 L136 11 H131 Z" fill="#D8ECFA"/><rect x="135.5" y="4.8" width="1.2" height="5" fill="#F2D000"/><path d="M136.5 9.7 v2.2 M135.4 10.8 h2.2" stroke="#A01010" stroke-width="0.8"/><path d="M145 7 L148 5 L151.5 6.5 V10.5 L148 11.3 L145 10 Z" fill="#6C88B8" opacity="0.8"/><path d="M164.5 10 Q164.5 6 160 6.5 H158.2" fill="none" stroke="#fff" stroke-width="1.3"/><path d="M156.8 6.5 L159.5 4.3 V8.7 Z" fill="#fff"/><path d="M169.5 10 Q169.5 6.5 173.5 6.8 H175" fill="none" stroke="#8AA6D0" stroke-width="1.2"/><path d="M176.2 6.8 L173.8 4.8 V8.8 Z" fill="#8AA6D0"/><circle cx="186" cy="7.6" r="3.9" fill="#D6E6F4" stroke="#9AA0B0" stroke-width="0.5"/><circle cx="196.5" cy="5" r="0.9" fill="#E0B020"/><path d="M199 4.5 h1 M198 7.5 h2.5 M197 10 h3.5" stroke="#BFD4F0" stroke-width="0.6"/><rect x="208.5" y="4" width="5.5" height="7" fill="#F6F2EA"/><path d="M209 7.5 h4.5" stroke="#666" stroke-width="0.4"/><ellipse cx="224.8" cy="7.3" rx="4.2" ry="3.2" fill="#CFE4F6"/><path d="M221.5 9 Q225 11 228.5 8" stroke="#E01010" stroke-width="1.2" fill="none"/><rect x="233.5" y="4" width="7.3" height="6.8" fill="#F2F0EA"/><path d="M234 6.3 h6.5 M234 8.5 h6.5 M236 4 v6.8" stroke="#999" stroke-width="0.4"/><path d="M245.7 6.5 h2.6 l-1.3 1.6 Z" fill="#D8E2F0"/></svg>
<svg style="position:absolute;left:720px;top:0px;overflow:visible" width="304" height="33" viewBox="720 0 304 33"><path d="M974 7.6 H978.2" stroke="#fff" stroke-width="1"/><path d="M993.3 5.2 h3.8 v3.4 h-3.8 Z M994.6 5.2 v-1.4 h3.8 v3.5 h-1.3" fill="none" stroke="#fff" stroke-width="0.8"/><path d="M1012.8 4.2 L1017 8 M1017 4.2 L1012.8 8" stroke="#fff" stroke-width="0.8"/><path d="M970.3 24.3 h2.6 l-1.3 1.5 Z M988.7 24.3 h2.6 l-1.3 1.5 Z" fill="#E4EAF4"/><circle cx="980.2" cy="25.4" r="3.5" fill="#F4F4F4"/><text x="978.5" y="27.8" font-size="5.5" font-weight="bold" font-family="Liberation Sans" fill="#E02020">?</text><path d="M995.8 26.4 H1000" stroke="#fff" stroke-width="1"/><path d="M1006.3 24.6 h3.6 v3.2 h-3.6 Z M1007.5 24.6 v-1.3 h3.6 v3.3 h-1.2" fill="none" stroke="#fff" stroke-width="0.8"/><path d="M1016.4 23.5 L1020.3 27.4 M1020.3 23.5 L1016.4 27.4" stroke="#fff" stroke-width="0.8"/><circle cx="725" cy="25" r="2.2" fill="none" stroke="#C8D6EA" stroke-width="0.6"/><path d="M724.2 27.5 h1.6 M724.4 28.5 h1.2" stroke="#C8D6EA" stroke-width="0.5"/></svg>
<svg style="position:absolute;left:14px;top:121px;overflow:visible" width="115" height="170" viewBox="14 121 115 170"><path d="M20.9 131 V281" stroke="#D4D4D4" stroke-width="0.7"/><path d="M31 246 V261.5" stroke="#D4D4D4" stroke-width="0.7"/><path d="M20.9 137.03 H26.5" stroke="#C8C8C8" stroke-width="0.6"/><path d="M20.9 146.66 H26.5" stroke="#C8C8C8" stroke-width="0.6"/><path d="M20.9 156.29 H26.5" stroke="#C8C8C8" stroke-width="0.6"/><path d="M20.9 165.92 H26.5" stroke="#C8C8C8" stroke-width="0.6"/><path d="M20.9 175.55 H26.5" stroke="#C8C8C8" stroke-width="0.6"/><path d="M20.9 185.18 H26.5" stroke="#C8C8C8" stroke-width="0.6"/><path d="M20.9 194.81 H26.5" stroke="#C8C8C8" stroke-width="0.6"/><path d="M20.9 204.44 H26.5" stroke="#C8C8C8" stroke-width="0.6"/><path d="M20.9 214.07 H26.5" stroke="#C8C8C8" stroke-width="0.6"/><path d="M20.9 223.70 H26.5" stroke="#C8C8C8" stroke-width="0.6"/><path d="M20.9 233.33 H26.5" stroke="#C8C8C8" stroke-width="0.6"/><path d="M20.9 242.96 H26.5" stroke="#C8C8C8" stroke-width="0.6"/><path d="M31 252.59 H36" stroke="#C8C8C8" stroke-width="0.6"/><path d="M31 262.22 H36" stroke="#C8C8C8" stroke-width="0.6"/><path d="M20.9 271.85 H26.5" stroke="#C8C8C8" stroke-width="0.6"/><path d="M20.9 281.48 H26.5" stroke="#C8C8C8" stroke-width="0.6"/><rect x="18.7" y="134.83" width="4.5" height="4.5" fill="#F4F4F4" stroke="#B0B0B0" stroke-width="0.5"/><path d="M19.8 137.03 h2.3" stroke="#5A6A90" stroke-width="0.6"/><path d="M20.95 135.93 v2.3" stroke="#5A6A90" stroke-width="0.6"/><rect x="18.7" y="144.46" width="4.5" height="4.5" fill="#F4F4F4" stroke="#B0B0B0" stroke-width="0.5"/><path d="M19.8 146.66 h2.3" stroke="#5A6A90" stroke-width="0.6"/><path d="M20.95 145.56 v2.3" stroke="#5A6A90" stroke-width="0.6"/><rect x="18.7" y="269.65000000000003" width="4.5" height="4.5" fill="#F4F4F4" stroke="#B0B0B0" stroke-width="0.5"/><path d="M19.8 271.85 h2.3" stroke="#5A6A90" stroke-width="0.6"/><path d="M20.95 270.75 v2.3" stroke="#5A6A90" stroke-width="0.6"/><rect x="18.7" y="279.28000000000003" width="4.5" height="4.5" fill="#F4F4F4" stroke="#B0B0B0" stroke-width="0.5"/><path d="M19.8 281.48 h2.3" stroke="#5A6A90" stroke-width="0.6"/><path d="M20.95 280.38 v2.3" stroke="#5A6A90" stroke-width="0.6"/><rect x="18.7" y="240.76000000000002" width="4.5" height="4.5" fill="#F4F4F4" stroke="#B0B0B0" stroke-width="0.5"/><path d="M19.8 242.96 h2.3" stroke="#5A6A90" stroke-width="0.6"/><rect x="28.8" y="250.39000000000004" width="4.5" height="4.5" fill="#F4F4F4" stroke="#B0B0B0" stroke-width="0.5"/><path d="M29.900000000000002 252.59000000000003 h2.3" stroke="#5A6A90" stroke-width="0.6"/><path d="M31.05 251.49000000000004 v2.3" stroke="#5A6A90" stroke-width="0.6"/><rect x="28.8" y="260.02000000000004" width="4.5" height="4.5" fill="#F4F4F4" stroke="#B0B0B0" stroke-width="0.5"/><path d="M29.900000000000002 262.22 h2.3" stroke="#5A6A90" stroke-width="0.6"/><path d="M31.05 261.12 v2.3" stroke="#5A6A90" stroke-width="0.6"/><path d="M16.3 125.5 L19.5 127 L22 125 L25 124.8 L22.5 128 L24.8 130.5 L21 129.8 L19.5 131.8 L18.5 129 L16.3 129.5 L18 127.5 Z" fill="#D00000"/><path d="M19 127 L22 126.5 L21 129" fill="#900"/><path d="M29.5 133.8 V139.4 H34.5 M29.5 139.4 L27.8 140.70000000000002" stroke="#111" stroke-width="0.7" fill="none"/><circle cx="29.5" cy="134.0" r="0.8" fill="#111"/><path d="M33.3 138.3 L35 139.4 L33.3 140.5 Z" fill="#111"/><circle cx="27.8" cy="140.70000000000002" r="0.8" fill="#111"/><path d="M27.5 145.1 L30.2 142.9 H35 V148.4 L32.3 150.70000000000002 H27.5 Z" fill="#fff" stroke="#111" stroke-width="0.7"/><path d="M27.5 145.1 H32.3 L35 142.9 M32.3 145.1 V150.70000000000002" fill="none" stroke="#111" stroke-width="0.6"/><path d="M29 146.4 L32.3 149.4 M30.5 143.9 L33.5 146.70000000000002" fill="none" stroke="#333" stroke-width="0.5"/><circle cx="32.2" cy="155.79000000000002" r="2.9" fill="#fff" stroke="#111" stroke-width="0.7"/><path d="M30.6 154.69 Q32.2 153.69 33.6 155.09" fill="none" stroke="#111" stroke-width="0.5"/><path d="M27.5 157.09 L29.2 155.89000000000001 H31" fill="none" stroke="#111" stroke-width="0.7"/><path d="M32 157.09 L34.9 156.09 V158.69 L32 160.39000000000001 Z" fill="#fff" stroke="#111" stroke-width="0.7"/><rect x="27.5" y="157.09" width="4.5" height="3.3" fill="#fff" stroke="#111" stroke-width="0.75"/><circle cx="32.2" cy="175.05" r="2.9" fill="#fff" stroke="#111" stroke-width="0.7"/><path d="M30.6 173.95 Q32.2 172.95 33.6 174.35" fill="none" stroke="#111" stroke-width="0.5"/><path d="M27.5 176.35 L29.2 175.15 H31" fill="none" stroke="#111" stroke-width="0.7"/><path d="M32 176.35 L34.9 175.35 V177.95 L32 179.65 Z" fill="#fff" stroke="#111" stroke-width="0.7"/><rect x="27.5" y="176.35" width="4.5" height="3.3" fill="#fff" stroke="#111" stroke-width="0.75"/><circle cx="32.2" cy="184.68" r="2.9" fill="#fff" stroke="#111" stroke-width="0.7"/><path d="M30.6 183.57999999999998 Q32.2 182.57999999999998 33.6 183.98" fill="none" stroke="#111" stroke-width="0.5"/><path d="M27.5 185.98 L29.2 184.78 H31" fill="none" stroke="#111" stroke-width="0.7"/><path d="M32 185.98 L34.9 184.98 V187.57999999999998 L32 189.28 Z" fill="#fff" stroke="#111" stroke-width="0.7"/><rect x="27.5" y="185.98" width="4.5" height="3.3" fill="#fff" stroke="#111" stroke-width="0.75"/><circle cx="32.2" cy="194.31" r="2.9" fill="#fff" stroke="#111" stroke-width="0.7"/><path d="M30.6 193.20999999999998 Q32.2 192.20999999999998 33.6 193.60999999999999" fill="none" stroke="#111" stroke-width="0.5"/><path d="M27.5 195.60999999999999 L29.2 194.41 H31" fill="none" stroke="#111" stroke-width="0.7"/><path d="M32 195.60999999999999 L34.9 194.60999999999999 V197.20999999999998 L32 198.91 Z" fill="#fff" stroke="#111" stroke-width="0.7"/><rect x="27.5" y="195.60999999999999" width="4.5" height="3.3" fill="#fff" stroke="#111" stroke-width="0.75"/><circle cx="32.2" cy="203.94" r="2.9" fill="#fff" stroke="#111" stroke-width="0.7"/><path d="M30.6 202.83999999999997 Q32.2 201.83999999999997 33.6 203.23999999999998" fill="none" stroke="#111" stroke-width="0.5"/><path d="M27.5 205.23999999999998 L29.2 204.04 H31" fill="none" stroke="#111" stroke-width="0.7"/><path d="M32 205.23999999999998 L34.9 204.23999999999998 V206.83999999999997 L32 208.54 Z" fill="#fff" stroke="#111" stroke-width="0.7"/><rect x="27.5" y="205.23999999999998" width="4.5" height="3.3" fill="#fff" stroke="#111" stroke-width="0.75"/><circle cx="32.2" cy="232.83" r="2.9" fill="#fff" stroke="#111" stroke-width="0.7"/><path d="M30.6 231.73 Q32.2 230.73 33.6 232.13" fill="none" stroke="#111" stroke-width="0.5"/><path d="M27.5 234.13 L29.2 232.93 H31" fill="none" stroke="#111" stroke-width="0.7"/><path d="M32 234.13 L34.9 233.13 V235.73 L32 237.43 Z" fill="#fff" stroke="#111" stroke-width="0.7"/><rect x="27.5" y="234.13" width="4.5" height="3.3" fill="#fff" stroke="#111" stroke-width="0.75"/><rect x="26.3" y="162.42000000000002" width="7.3" height="7.3" fill="#F0F0F0" stroke="#444" stroke-width="0.6"/><path d="M27.5 168.92000000000002 L33.5 162.92000000000002 M27.5 168.92000000000002 V163.92000000000002 M27.5 168.92000000000002 H32.5" stroke="#555" stroke-width="0.5"/><path d="M33 163.42000000000002 L35 161.42000000000002" stroke="#666" stroke-width="0.6"/><rect x="26.3" y="210.57" width="7.3" height="7.3" fill="#F0F0F0" stroke="#444" stroke-width="0.6"/><path d="M27.5 217.07 L33.5 211.07 M27.5 217.07 V212.07 M27.5 217.07 H32.5" stroke="#555" stroke-width="0.5"/><path d="M33 211.57 L35 209.57" stroke="#666" stroke-width="0.6"/><rect x="26.3" y="220.20000000000002" width="7.3" height="7.3" fill="#F0F0F0" stroke="#444" stroke-width="0.6"/><path d="M27.5 226.70000000000002 L33.5 220.70000000000002 M27.5 226.70000000000002 V221.70000000000002 M27.5 226.70000000000002 H32.5" stroke="#555" stroke-width="0.5"/><path d="M33 221.20000000000002 L35 219.20000000000002" stroke="#666" stroke-width="0.6"/><circle cx="32.2" cy="242.46" r="2.9" fill="#3A6CC8" stroke="#102050" stroke-width="0.7"/><path d="M30.6 241.35999999999999 Q32.2 240.35999999999999 33.6 241.76" fill="none" stroke="#102050" stroke-width="0.5"/><path d="M27.5 243.76 L29.2 242.56 H31" fill="none" stroke="#102050" stroke-width="0.7"/><path d="M32 243.76 L34.9 242.76 V245.35999999999999 L32 247.06 Z" fill="#3A6CC8" stroke="#102050" stroke-width="0.7"/><rect x="27.5" y="243.76" width="4.5" height="3.3" fill="#3A6CC8" stroke="#102050" stroke-width="0.75"/><rect x="37.2" y="249.39000000000004" width="5.4" height="7.4" fill="#F2D010" stroke="#333" stroke-width="0.6"/><path d="M37.2 249.39000000000004 L38.5 248.29000000000002 H43.8 L42.6 249.39000000000004 Z" fill="#3A6CC8" stroke="#333" stroke-width="0.4"/><path d="M44.6 256.59000000000003 V249.09000000000003" stroke="#E03030" stroke-width="0.7"/><rect x="37" y="260.22" width="8" height="6" rx="1.5" fill="#3A6CC8" stroke="#222" stroke-width="0.6"/><rect x="39" y="261.72" width="4" height="2.5" fill="#fff"/><rect x="43.5" y="262.22" width="1.5" height="3" fill="#F2D010"/><path d="M37.5 259.22 Q41 256.72 44.5 259.22" stroke="#E03030" stroke-width="0.7" fill="none"/><rect x="26.8" y="269.85" width="8.6" height="6.3" fill="#444" stroke="#222" stroke-width="0.4"/><circle cx="28.8" cy="268.85" r="1.4" fill="#333"/><circle cx="32.5" cy="268.85" r="1.4" fill="#333"/><rect x="28" y="271.35" width="5.5" height="3" fill="#8A8AA0"/><path d="M27 277.48 L35 285.48" stroke="#6A8AC0" stroke-width="1.2"/><path d="M30 280.48 L34.5 285.28000000000003" stroke="#E08060" stroke-width="1.3"/><circle cx="28" cy="278.18" r="1" fill="#3A6CC8"/></svg>
<svg style="position:absolute;left:0px;top:170px;overflow:visible" width="14" height="320" viewBox="0 170 14 320"><rect x="0" y="174" width="13.6" height="314.5" fill="#F0F0F0"/><path d="M3.5 176.3 H10.5" stroke="#8A8A8A" stroke-width="0.6" stroke-dasharray="0.7 1.1"/><path d="M3.5 251.6 H10.5" stroke="#8A8A8A" stroke-width="0.6" stroke-dasharray="0.7 1.1"/><path d="M3.5 381 H10.5" stroke="#8A8A8A" stroke-width="0.6" stroke-dasharray="0.7 1.1"/><path d="M1.5 205.5 H12" stroke="#D5D5D5" stroke-width="0.6"/><path d="M1.5 457 H12" stroke="#D5D5D5" stroke-width="0.6"/><path d="M3.5 183 L5 181.5 H10 V187 L8.5 188.5 H3.5 Z" fill="none" stroke="#C4C4C4" stroke-width="0.6"/><circle cx="6.2" cy="185.6" r="2.3" fill="none" stroke="#CACACA" stroke-width="0.5"/><path d="M3.5 194.4 L5 192.9 H10 V198.4 L8.5 199.9 H3.5 Z" fill="none" stroke="#C4C4C4" stroke-width="0.6"/><circle cx="6.2" cy="197.0" r="2.3" fill="none" stroke="#CACACA" stroke-width="0.5"/><path d="M3.5 210.8 L5 209.3 H10 V214.8 L8.5 216.3 H3.5 Z" fill="none" stroke="#C4C4C4" stroke-width="0.6"/><circle cx="6.2" cy="213.4" r="2.3" fill="none" stroke="#CACACA" stroke-width="0.5"/><path d="M3.5 222.8 L5 221.3 H10 V226.8 L8.5 228.3 H3.5 Z" fill="none" stroke="#C4C4C4" stroke-width="0.6"/><circle cx="6.2" cy="225.4" r="2.3" fill="none" stroke="#CACACA" stroke-width="0.5"/><path d="M3.5 232.9 L5 231.4 H10 V236.9 L8.5 238.4 H3.5 Z" fill="none" stroke="#C4C4C4" stroke-width="0.6"/><circle cx="6.2" cy="235.5" r="2.3" fill="none" stroke="#CACACA" stroke-width="0.5"/><path d="M3.6 244 v2 l-1.3 -1 Z" fill="#555"/><path d="M3.6 373.2 v2 l-1.3 -1 Z" fill="#555"/><path d="M3.2 483.8 h2 l-1 1.3 Z" fill="#555"/><path d="M3 258.8 L4.8 257.0 H11 V263.3 L9.2 265.0 H3 Z" fill="#4A86D4" stroke="#2A5AA0" stroke-width="0.5"/><path d="M3 258.8 H9.2 L11 257.0 M9.2 258.8 V265.0" fill="none" stroke="#2A5AA0" stroke-width="0.4"/><path d="M3 270 L4.8 268.2 H11 V274.5 L9.2 276.2 H3 Z" fill="#fff" stroke="#3A6AB0" stroke-width="0.5"/><path d="M3 270 L4.8 268.2 H11 L9.2 270 Z" fill="#4A86D4"/><path d="M3 281.5 L4.8 279.7 H11 V286.0 L9.2 287.7 H3 Z" fill="#4A86D4" stroke="#2A5AA0" stroke-width="0.5"/><path d="M3 281.5 L4.8 279.7 H11 L9.2 281.5 Z" fill="#fff" opacity="0.6"/><path d="M3 292.8 L4.8 291.0 H11 V297.3 L9.2 299.0 H3 Z" fill="#fff" stroke="#3A6AB0" stroke-width="0.5"/><path d="M3 296.8 L5 295.3 H11 V297.3 L9.2 299.0 H3 Z" fill="#4A86D4"/><path d="M3 304 L4.8 302.2 H11 V308.5 L9.2 310.2 H3 Z" fill="#4A86D4" stroke="#2A5AA0" stroke-width="0.5"/><path d="M3 304 L4.8 302.2 H11 L9.2 304 Z" fill="#fff" opacity="0.6"/><path d="M3 316.8 L4.8 315.0 H11 V321.3 L9.2 323.0 H3 Z" fill="#fff" stroke="#3A6AB0" stroke-width="0.5"/><rect x="4" y="316.8" width="5" height="5" fill="#4A86D4"/><path d="M3 328.8 L4.8 327.0 H11 V333.3 L9.2 335.0 H3 Z" fill="#4A86D4" stroke="#2A5AA0" stroke-width="0.5"/><path d="M3 328.8 H9.2 L11 327.0 M9.2 328.8 V335.0" fill="none" stroke="#2A5AA0" stroke-width="0.4"/><path d="M3 340.7 L4.8 338.9 H11 V345.2 L9.2 346.9 H3 Z" fill="#4A86D4" stroke="#2A5AA0" stroke-width="0.5"/><path d="M3 340.7 L4.8 338.9 H11 L9.2 340.7 Z" fill="#fff" opacity="0.6"/><path d="M3 352 L4.8 350.2 H11 V356.5 L9.2 358.2 H3 Z" fill="#4A86D4" stroke="#2A5AA0" stroke-width="0.5"/><path d="M3 352 L4.8 350.2 H11 L9.2 352 Z" fill="#fff" opacity="0.6"/><path d="M3 364 L4.8 362.2 H11 V368.5 L9.2 370.2 H3 Z" fill="#4A86D4" stroke="#2A5AA0" stroke-width="0.5"/><path d="M3 364 L4.8 362.2 H11 L9.2 364 Z" fill="#fff" opacity="0.6"/><path d="M3.5 387 L10 393.5" stroke="#333" stroke-width="0.7"/><circle cx="4" cy="387.5" r="0.7" fill="#222"/><circle cx="9.5" cy="393" r="0.7" fill="#222"/><path d="M2.5 399.5 V402 M11 399.5 V402 M2.5 400.2 H11 M2.5 401.6 H11" stroke="#F06060" stroke-width="0.5"/><ellipse cx="7" cy="403.3" rx="1.5" ry="0.9" fill="#3A90F0"/><path d="M4 410 V416.5 M3 410 h2 M3 416.5 h2" stroke="#E03030" stroke-width="0.6"/><ellipse cx="8.3" cy="413.3" rx="1.3" ry="1" fill="#3A90F0"/><path d="M3 427.5 H10.8 L7.5 421.8 Z" fill="none" stroke="#333" stroke-width="0.6"/><circle cx="6.8" cy="437.3" r="3.7" fill="#fff" stroke="#555" stroke-width="0.6"/><path d="M4.8 435.2 L6.8 437.3" stroke="#333" stroke-width="0.6"/><circle cx="6.8" cy="448.6" r="3.7" fill="#fff" stroke="#555" stroke-width="0.6"/><path d="M4.2 446 L9.4 451.2" stroke="#333" stroke-width="0.6"/><path d="M3.2 468 Q4 463.5 7.5 463" fill="none" stroke="#555" stroke-width="0.5"/><path d="M8.2 466 L9.6 461.5 L11 466" fill="none" stroke="#111" stroke-width="0.8"/><rect x="5" y="472" width="3.6" height="9" fill="#C4C4C4"/></svg>
<svg style="position:absolute;left:0px;top:95px;overflow:visible" width="1024" height="450" viewBox="0 95 1024 450"><path d="M110 102.5 h4.2 l-2.1 2.3 Z" fill="#6A6A6A"/><path d="M120 100.5 h2.6 v3 h-2.6 Z M119 103.5 h4.6 M121.3 103.5 v2.3" fill="none" stroke="#555" stroke-width="0.6"/><rect x="107" y="110.8" width="8.5" height="9.8" fill="#F6EDE4" stroke="#D8D0C8" stroke-width="0.4"/><path d="M109 113 L113.5 118.6 M113.5 113 L109 118.6" stroke="#E83030" stroke-width="1"/><path d="M119.5 119.5 L122.3 113 L125.2 119.5 Z M120.6 117 H124" fill="none" stroke="#6A9AD0" stroke-width="0.6"/><circle cx="118.8" cy="112.6" r="1" fill="#F0C020"/><path d="M1016.5 90.8 h4.4 l-2.2 2.4 Z" fill="#555"/><path d="M20.3 505.3 L18.5 507.1 L20.3 508.9" fill="none" stroke="#333" stroke-width="0.8"/><path d="M121.2 505.3 L123 507.1 L121.2 508.9" fill="none" stroke="#333" stroke-width="0.8"/><path d="M18 522.5 L20.4 514.5 L22.8 522.5 Z M19 519.5 H21.8 M18.6 521 H22.2" fill="none" stroke="#7AA6D8" stroke-width="0.6"/><rect x="49.6" y="514" width="5.4" height="8.5" fill="#fff" stroke="#888" stroke-width="0.5"/><rect x="50.3" y="514.5" width="4" height="3" fill="#2A5AA8"/><path d="M51 519 v2.3 h2.5" stroke="#666" stroke-width="0.4" fill="none"/><circle cx="95.3" cy="517.2" r="2.6" fill="#EAF4FC" stroke="#777" stroke-width="0.6"/><path d="M97.2 519.1 L99.8 521.8" stroke="#555" stroke-width="1"/><rect x="4.8" y="528.2" width="5.6" height="7.5" fill="#fff" stroke="#666" stroke-width="0.6"/><path d="M6 531 h3 M6 533 h3" stroke="#999" stroke-width="0.4"/><path d="M10.4 528.5 v1.5" stroke="#333" stroke-width="0.5"/><rect x="4" y="539" width="29" height="1.8" fill="#D6D6D6"/></svg>
<svg style="position:absolute;left:590px;top:540px;overflow:visible" width="434" height="16" viewBox="590 540 434 16"><rect x="605.5" y="544.2" width="3.8" height="8" fill="#F2D050" stroke="#A08020" stroke-width="0.4"/><circle cx="604" cy="545" r="0.7" fill="#D0A020"/><circle cx="671.5" cy="547.2" r="2.6" fill="#F4F8FC" stroke="#888" stroke-width="0.7"/><path d="M673.3 549 L675.7 551.5" stroke="#555" stroke-width="0.9"/><circle cx="684" cy="547.2" r="2.6" fill="#F4F8FC" stroke="#888" stroke-width="0.7"/><path d="M685.8 549 L688.2 551.5" stroke="#555" stroke-width="0.9"/><path d="M693.5 547.3 h2.2 l-1.1 1.2 Z" fill="#444"/><path d="M712.1999999999999 547.3 h2.2 l-1.1 1.2 Z" fill="#444"/><path d="M730.6999999999999 547.3 h2.2 l-1.1 1.2 Z" fill="#444"/><path d="M749.1 547.3 h2.2 l-1.1 1.2 Z" fill="#444"/><path d="M778.5 547.3 h2.2 l-1.1 1.2 Z" fill="#444"/><path d="M795.6 547.3 h2.2 l-1.1 1.2 Z" fill="#444"/><path d="M699.8 546 L701 544.6 H706.5 V550.5 L705.3 551.8 H699.8 Z" fill="#F2D010" stroke="#444" stroke-width="0.4"/><path d="M707.2 548 l1.5 -0.5 v1.3 Z" fill="#E03030"/><path d="M718.2 545.5 L719.8 543.8 H727 V551 L725.3 552.8 H718.2 Z" fill="#4A86D4" stroke="#2A5AA0" stroke-width="0.4"/><path d="M725.3 545.5 L727 543.8 V551 L725.3 552.8 Z" fill="#D6E2EE"/><path d="M737 548 h3.5 M740.5 545.5 v3" stroke="#333" stroke-width="0.6"/><rect x="740.8" y="547.3" width="4.2" height="4.5" fill="#333"/><rect x="741.5" y="548" width="2.8" height="2" fill="#3A90F0"/><path d="M756 546 L758.5 544 H763.2 V550 L760.7 552 H756 Z" fill="#8AB0DE" stroke="#4A6A9A" stroke-width="0.5"/><circle cx="770.5" cy="549" r="2" fill="none" stroke="#7A96C0" stroke-width="0.6"/><circle cx="775" cy="549" r="2" fill="none" stroke="#7A96C0" stroke-width="0.6"/><path d="M772.5 549 h0.5 M776.5 544.5 L775 547" stroke="#7A96C0" stroke-width="0.5"/><path d="M785.3 546 L787.3 544 H793.3 V550.3 L791.3 552.5 H785.3 Z" fill="#3A78CC" stroke="#1E4E90" stroke-width="0.5"/><path d="M785.3 546 L787.3 544 H793.3 L791.3 546 Z" fill="#8AB8EA"/><path d="M804 547.5 L806 545.5 L808 547 L810 549.5 L809 552" fill="none" stroke="#BBB" stroke-width="0.8"/><path d="M817.5 544 V551.5 L819.3 550 L821 552.8 L822 552.3 L820.6 549.5 L822.8 549.3 Z" fill="#fff" stroke="#222" stroke-width="0.6"/><rect x="828.3" y="543.8" width="7" height="8.5" fill="none" stroke="#DDD" stroke-width="0.4"/><path d="M831.5 546 V552 L833 551 L834 553" fill="none" stroke="#C8C8C8" stroke-width="0.6"/><path d="M908.3 547.8 h2.2 l-1.1 1.2 Z M1005.5 547.8 h2.2 l-1.1 1.2 Z" fill="#9A9A9A"/><rect x="1015" y="543.6" width="4" height="3" fill="#D02020"/><rect x="1012.6" y="549" width="3.4" height="3.4" fill="#3A78CC"/><rect x="1017.6" y="549" width="3.4" height="3.4" fill="#F2D020"/><path d="M1017 546.6 V548 M1014.3 549 V548 H1019.3 V549" fill="none" stroke="#555" stroke-width="0.5"/></svg>
<svg style="position:absolute;left:138px;top:488px;overflow:visible" width="22" height="20" viewBox="138 488 22 20"><path d="M150.4 506 V500" stroke="#6AA0F0" stroke-width="0.9"/><path d="M149.4 501.5 L150.4 497 L151.4 501.5 Z" fill="#2A50D8"/><path d="M150.6 506.2 L154.5 504" stroke="#F04040" stroke-width="1"/><path d="M153.5 503.3 L157.8 501.4 L155.2 504.8 Z" fill="#A00000"/><path d="M150.2 506.2 L146 504" stroke="#30D050" stroke-width="1"/><path d="M147 503.3 L143 501.4 L145.4 504.8 Z" fill="#108030"/><ellipse cx="150.4" cy="506.4" rx="1.3" ry="0.8" fill="#fff"/><path d="M149.8 491.2 h2.2 l-2.2 2.6 h2.2" fill="none" stroke="#2A40F0" stroke-width="0.6"/><path d="M160.6 497.7 L162.4 500.5 M162.4 497.7 L160.6 500.5" stroke="#E03030" stroke-width="0.6"/><path d="M139.6 497.6 L140.6 499 L141.6 497.6 M140.6 499 V500.6" fill="none" stroke="#30D050" stroke-width="0.6"/></svg>
<svg style="position:absolute;left:480px;top:230px" width="220" height="220" viewBox="480 230 220 220">
<defs>
<filter id="b1" x="-10%" y="-10%" width="120%" height="120%"><feGaussianBlur stdDeviation="0.9"/></filter>
<linearGradient id="cyl" x1="0" x2="1" y1="0" y2="0">
 <stop offset="0" stop-color="#8A807A"/><stop offset="0.06" stop-color="#9A8F88"/><stop offset="0.3" stop-color="#AFA39B"/><stop offset="0.47" stop-color="#C2B6AE"/><stop offset="0.55" stop-color="#B3A79F"/><stop offset="0.8" stop-color="#A99D95"/><stop offset="1" stop-color="#988C85"/>
</linearGradient>
<linearGradient id="cylu" x1="0" x2="1" y1="0" y2="0">
 <stop offset="0" stop-color="#857A74"/><stop offset="0.15" stop-color="#968A84"/><stop offset="0.5" stop-color="#A99D96"/><stop offset="1" stop-color="#A0948D"/>
</linearGradient>
<linearGradient id="tor" x1="0" x2="0" y1="0" y2="1">
 <stop offset="0" stop-color="#C9C096"/><stop offset="0.55" stop-color="#CBC298"/><stop offset="0.85" stop-color="#C0B68A"/><stop offset="1" stop-color="#AFA57C"/>
</linearGradient>
<linearGradient id="sph" x1="0" x2="0" y1="0" y2="1">
 <stop offset="0" stop-color="#9CB0B0" stop-opacity="0.45"/><stop offset="0.55" stop-color="#80968C" stop-opacity="0.45"/><stop offset="0.75" stop-color="#9CB890" stop-opacity="0.5"/><stop offset="1" stop-color="#B0CC9C" stop-opacity="0.55"/>
</linearGradient>
</defs>
<!-- lower cylinder -->
<path d="M526.6 330 L526.6 393 A67.4 39 0 0 0 661.4 393 L661.4 330 Z" fill="url(#cyl)" stroke="#5E5650" stroke-width="0.6"/>
<!-- torus -->
<ellipse cx="594" cy="335.8" rx="84" ry="55.3" fill="#B4AA80" stroke="#9E956E" stroke-width="0.5"/>
<ellipse cx="594" cy="334" rx="82" ry="52.5" fill="#C5BC92" filter="url(#b1)"/>
<ellipse cx="594" cy="331" rx="77" ry="46" fill="none" stroke="#D6CEA6" stroke-width="3.2" filter="url(#b1)"/>
<ellipse cx="594" cy="326" rx="71" ry="42" fill="#ACA27B" filter="url(#b1)"/>
<ellipse cx="594" cy="322" rx="68.5" ry="39.5" fill="none" stroke="#7E7660" stroke-width="0.5"/>
<ellipse cx="594" cy="341" rx="81" ry="48" fill="none" stroke="#E4DE8C" stroke-width="0.6" stroke-dasharray="2 1.6"/>
<!-- upper cylinder -->
<path d="M526 282 L526 320 A68 39 0 0 0 662 320 L662 282 Z" fill="url(#cylu)" stroke="#5E5650" stroke-width="0.6"/>
<path d="M526.6 322 L526.6 330" stroke="#5E5650" stroke-width="0.6"/>
<ellipse cx="594" cy="282" rx="68" ry="39" fill="#B3A79F" stroke="#4E4842" stroke-width="0.7"/>
<!-- sphere -->
<circle cx="594" cy="337.5" r="55" fill="url(#sph)" stroke="#6F7F9C" stroke-width="0.9"/>
<!-- dashed yellow -->
<ellipse cx="594" cy="318" rx="74" ry="42" fill="none" stroke="#E6E08E" stroke-width="0.7" stroke-dasharray="2 1.6"/>
<ellipse cx="594" cy="345" rx="42" ry="24" fill="none" stroke="#E6E08E" stroke-width="0.6" stroke-dasharray="2 1.6"/>
<ellipse cx="594" cy="370" rx="44" ry="12" fill="none" stroke="#E6E08E" stroke-width="0.6" stroke-dasharray="2 1.6"/>
<circle cx="640" cy="306" r="12.5" fill="none" stroke="#E6E08E" stroke-width="0.6" stroke-dasharray="2 1.6"/><path d="M624 322 Q628 338 648 330" fill="none" stroke="#E6E08E" stroke-width="0.6" stroke-dasharray="2 1.6"/>
<!-- cyan ring -->
<ellipse cx="594" cy="338" rx="54.5" ry="30.5" fill="none" stroke="#1AF0F8" stroke-width="1.5"/>
<path d="M574.3 293.5 L594 283.8 L613.4 293.5 L594 303.4 Z" fill="#6CCCC8" fill-opacity="0.5" stroke="#1AF0F8" stroke-width="1.4"/>
<path d="M546 342.6 L565.4 352.4 L565.4 377.2 L547 368.5 Z" fill="#70D0C0" fill-opacity="0.5" stroke="#1AF0F8" stroke-width="1.4"/>
<path d="M643 342.6 L623.7 352.4 L623.7 377.2 L642 368.5 Z" fill="#70D0C0" fill-opacity="0.5" stroke="#1AF0F8" stroke-width="1.4"/>
<!-- yellow axis -->
<line x1="594" y1="282" x2="594" y2="393" stroke="#F4F000" stroke-width="1.4"/>
<!-- handles -->
<line x1="546" y1="365.3" x2="556" y2="360" stroke="#F02020" stroke-width="1.3"/>
<line x1="642" y1="365.3" x2="633" y2="360" stroke="#20D020" stroke-width="1.3"/>
<line x1="594" y1="337.3" x2="584.4" y2="342.7" stroke="#F02020" stroke-width="1.3"/>
<line x1="594" y1="337.3" x2="603.2" y2="342.7" stroke="#20D020" stroke-width="1.3"/>
<circle cx="546" cy="365.3" r="2.6" fill="#B81010" stroke="#111" stroke-width="0.8"/>
<circle cx="642" cy="365.3" r="2.6" fill="#B81010" stroke="#111" stroke-width="0.8"/>
<circle cx="594" cy="337.3" r="2.6" fill="#B81010" stroke="#111" stroke-width="0.8"/>
<circle cx="584.4" cy="342.7" r="2.3" fill="#20E0F0" stroke="#111" stroke-width="0.8"/>
<circle cx="603.2" cy="342.7" r="2.3" fill="#20E0F0" stroke="#111" stroke-width="0.8"/>
<circle cx="594" cy="326" r="2.2" fill="#20E0F0" stroke="#111" stroke-width="0.8"/>
<circle cx="594" cy="282.3" r="2.5" fill="#F8E800" stroke="#222" stroke-width="0.8"/>
<circle cx="594" cy="392.9" r="2.5" fill="#F8E800" stroke="#222" stroke-width="0.8"/>
</svg>
</body></html>
